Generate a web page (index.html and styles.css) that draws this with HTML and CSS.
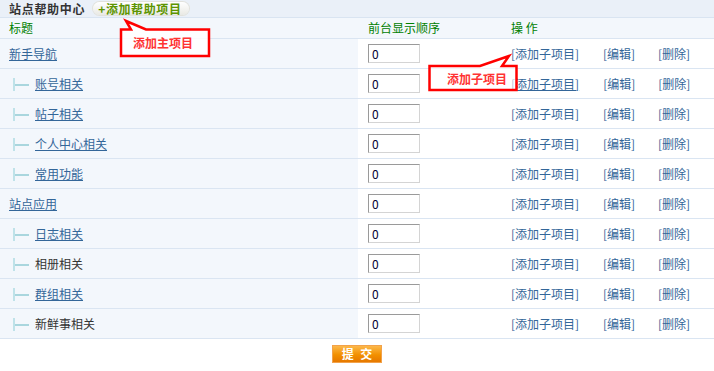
FILE: index.html
```html
<!DOCTYPE html>
<html lang="zh-CN">
<head>
<meta charset="utf-8">
<title>站点帮助中心</title>
<link rel="stylesheet" href="styles.css">
</head>
<body>
<div class="page">
  <div class="topbar">
    <span class="title">站点帮助中心</span>
    <a class="addbtn" href="#">+添加帮助项目</a>
  </div>
  <table class="list">
    <colgroup><col class="c1"><col class="c2"><col class="c3"></colgroup>
    <thead>
      <tr><th class="col-title">标题</th><th>前台显示顺序</th><th>操&nbsp;作</th></tr>
    </thead>
    <tbody>
      <tr><td class="name"><a href="#">新手导航</a></td><td><input class="order" value="0"></td><td class="ops"><a class="op1" href="#">[添加子项目]</a><a class="op2" href="#">[编辑]</a><a href="#">[删除]</a></td></tr>
      <tr><td class="name sub"><span class="tree"></span><a href="#">账号相关</a></td><td><input class="order" value="0"></td><td class="ops"><a class="op1 hover" href="#">[添加子项目]</a><a class="op2" href="#">[编辑]</a><a href="#">[删除]</a></td></tr>
      <tr><td class="name sub"><span class="tree"></span><a href="#">帖子相关</a></td><td><input class="order" value="0"></td><td class="ops"><a class="op1" href="#">[添加子项目]</a><a class="op2" href="#">[编辑]</a><a href="#">[删除]</a></td></tr>
      <tr><td class="name sub"><span class="tree"></span><a href="#">个人中心相关</a></td><td><input class="order" value="0"></td><td class="ops"><a class="op1" href="#">[添加子项目]</a><a class="op2" href="#">[编辑]</a><a href="#">[删除]</a></td></tr>
      <tr><td class="name sub"><span class="tree"></span><a href="#">常用功能</a></td><td><input class="order" value="0"></td><td class="ops"><a class="op1" href="#">[添加子项目]</a><a class="op2" href="#">[编辑]</a><a href="#">[删除]</a></td></tr>
      <tr><td class="name"><a href="#">站点应用</a></td><td><input class="order" value="0"></td><td class="ops"><a class="op1" href="#">[添加子项目]</a><a class="op2" href="#">[编辑]</a><a href="#">[删除]</a></td></tr>
      <tr><td class="name sub"><span class="tree"></span><a href="#">日志相关</a></td><td><input class="order" value="0"></td><td class="ops"><a class="op1" href="#">[添加子项目]</a><a class="op2" href="#">[编辑]</a><a href="#">[删除]</a></td></tr>
      <tr><td class="name sub"><span class="tree"></span><span class="plain">相册相关</span></td><td><input class="order" value="0"></td><td class="ops"><a class="op1" href="#">[添加子项目]</a><a class="op2" href="#">[编辑]</a><a href="#">[删除]</a></td></tr>
      <tr><td class="name sub"><span class="tree"></span><a href="#">群组相关</a></td><td><input class="order" value="0"></td><td class="ops"><a class="op1" href="#">[添加子项目]</a><a class="op2" href="#">[编辑]</a><a href="#">[删除]</a></td></tr>
      <tr><td class="name sub"><span class="tree"></span><span class="plain">新鲜事相关</span></td><td><input class="order" value="0"></td><td class="ops"><a class="op1" href="#">[添加子项目]</a><a class="op2" href="#">[编辑]</a><a href="#">[删除]</a></td></tr>
    </tbody>
  </table>
  <div class="actions"><button class="submit" type="button">提 交</button></div>

  <svg class="callouts" width="714" height="371" viewBox="0 0 714 371">
    <path d="M121,29.5 L131,29.5 L126,21 L146,29.5 L209,29.5 L209,56 L121,56 Z" fill="#ffffff" fill-opacity="0.85" stroke="#ff0000" stroke-width="2.5" stroke-linejoin="miter"/>
    <path d="M429.5,66 L480,66 L509,56 L502,66 L516.5,66 L516.5,90 L429.5,90 Z" fill="#ffffff" fill-opacity="0.6" stroke="#ff0000" stroke-width="2.5" stroke-linejoin="miter"/>
  </svg>
  <div class="note note1">添加主项目</div>
  <div class="note note2">添加子项目</div>
</div>
</body>
</html>
```

FILE: styles.css
```css
html, body {
  margin: 0;
  padding: 0;
  background: #ffffff;
}

.page {
  position: relative;
  width: 714px;
  height: 371px;
  font-family: "Noto Sans CJK SC", "Noto Sans", sans-serif;
  font-size: 12px;
  color: #333333;
}

.topbar {
  height: 17px;
  background: #eaf0f8;
  border-bottom: 1px solid #d9e4f1;
  display: flex;
  align-items: center;
  padding-left: 9px;
  box-sizing: content-box;
}

.title {
  font-weight: bold;
  letter-spacing: 0.7px;
  color: #333333;
  line-height: 16px;
}

.addbtn {
  margin-left: 8px;
  height: 13px;
  line-height: 13px;
  padding: 0 8px 0 5px;
  border-radius: 7px;
  background: linear-gradient(#ffffff, #e9e9e4);
  box-shadow: 0 0 0 1px #e2e2dc;
  color: #5c9400;
  font-weight: bold;
  letter-spacing: 0.6px;
  text-decoration: none;
}

.list {
  width: 714px;
  border-collapse: collapse;
  table-layout: fixed;
}

.list col.c1 { width: 358px; }
.list col.c2 { width: 143px; }

.list th {
  height: 20px;
  padding: 0 0 0 10px;
  text-align: left;
  font-weight: normal;
  color: #008000;
  background: #f3f7fc;
  border-bottom: 1px solid #dae5f2;
  line-height: 16px;
  vertical-align: middle;
}

.list th.col-title {
  padding-left: 9px;
}

.list td {
  height: 29px;
  padding: 0 0 0 10px;
  border-bottom: 1px solid #dae5f2;
  vertical-align: middle;
  line-height: 16px;
  background: #ffffff;
}

.list td.name {
  padding-left: 9px;
  background: #f3f7fc;
}

.list td.sub {
  padding-left: 13px;
}

.list a {
  color: #336699;
}

.plain {
  color: #333333;
}

.tree {
  display: inline-block;
  width: 16px;
  height: 13px;
  margin-right: 6px;
  vertical-align: -2px;
  background:
    linear-gradient(#a9d6de, #a9d6de) 2px 6px / 14px 2px no-repeat,
    linear-gradient(#bfe2e9, #bfe2e9) 0 0 / 2px 13px no-repeat;
}

.order {
  display: block;
  width: 52px;
  height: 19px;
  box-sizing: border-box;
  margin: 0;
  padding: 0 0 0 3px;
  border: 1px solid;
  border-color: #9a9a9a #d4d4d4 #d4d4d4 #9a9a9a;
  font-family: "Noto Sans CJK SC", "Noto Sans", sans-serif;
  font-size: 12px;
  color: #000033;
  background: #ffffff;
}

.ops {
  white-space: nowrap;
}

.ops a {
  display: inline-block;
  text-decoration: none;
  color: #336699;
}

.ops a.op1 { width: 92px; }
.ops a.op2 { width: 55px; }
.ops a.hover span,
.ops a.op1.hover { text-decoration: none; }
.ops a.op1.hover {
  width: auto;
  margin-right: 24px;
  text-decoration: underline;
}

.actions {
  display: flex;
  justify-content: flex-start;
  padding: 6px 0 0 332px;
}

.submit {
  width: 50px;
  height: 18px;
  padding: 0;
  border: 1px solid #f2a24a;
  background: linear-gradient(#fcb84a, #f29000 55%, #e67800);
  color: #ffffff;
  font-family: "Noto Sans CJK SC", "Noto Sans", sans-serif;
  font-size: 12px;
  font-weight: bold;
  line-height: 16px;
  word-spacing: 4px;
}

.callouts {
  position: absolute;
  left: 0;
  top: 0;
  pointer-events: none;
}

.note {
  position: absolute;
  color: #ff3333;
  font-weight: bold;
  font-size: 12px;
  line-height: 16px;
  pointer-events: none;
}

.note1 { left: 133px; top: 35px; }
.note2 { left: 447px; top: 71px; }
```
